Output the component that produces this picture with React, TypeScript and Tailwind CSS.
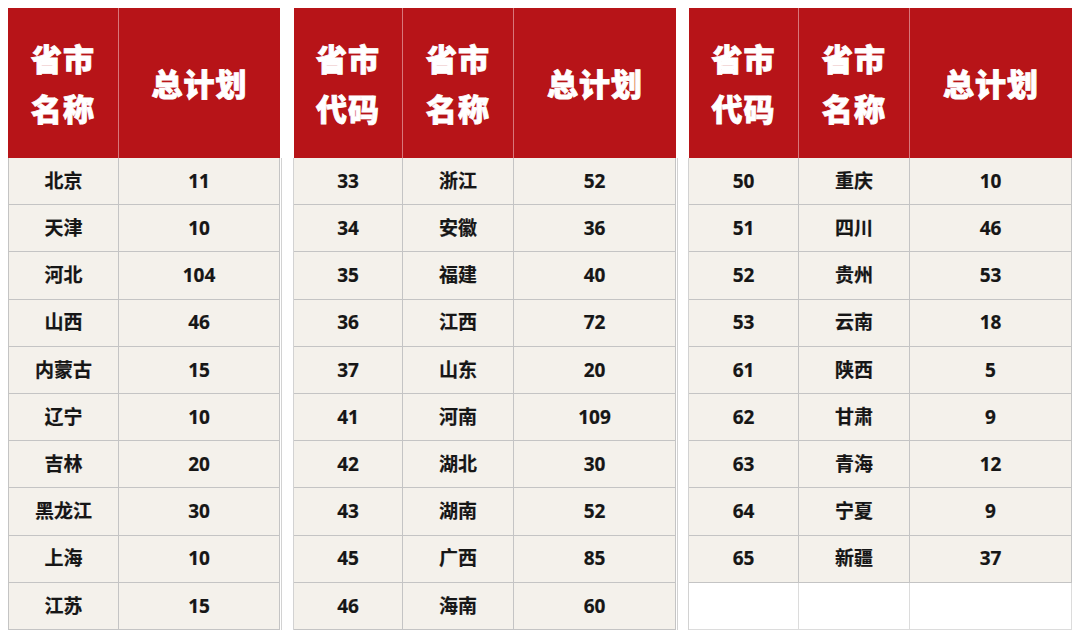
import React from "react";

const RED = "bg-[#b71418]";

type Col = { w: string; head: string[] };

const t1: { cols: Col[]; rows: string[][] } = {
  cols: [
    { w: "w-[111px]", head: ["省市", "名称"] },
    { w: "w-[161px]", head: ["总计划"] },
  ],
  rows: [
    ["北京", "11"],
    ["天津", "10"],
    ["河北", "104"],
    ["山西", "46"],
    ["内蒙古", "15"],
    ["辽宁", "10"],
    ["吉林", "20"],
    ["黑龙江", "30"],
    ["上海", "10"],
    ["江苏", "15"],
  ],
};

const t2 = {
  cols: [
    { w: "w-[109px]", head: ["省市", "代码"] },
    { w: "w-[111px]", head: ["省市", "名称"] },
    { w: "w-[162px]", head: ["总计划"] },
  ],
  rows: [
    ["33", "浙江", "52"],
    ["34", "安徽", "36"],
    ["35", "福建", "40"],
    ["36", "江西", "72"],
    ["37", "山东", "20"],
    ["41", "河南", "109"],
    ["42", "湖北", "30"],
    ["43", "湖南", "52"],
    ["45", "广西", "85"],
    ["46", "海南", "60"],
  ],
};

const t3 = {
  cols: [
    { w: "w-[110px]", head: ["省市", "代码"] },
    { w: "w-[111px]", head: ["省市", "名称"] },
    { w: "w-[162px]", head: ["总计划"] },
  ],
  rows: [
    ["50", "重庆", "10"],
    ["51", "四川", "46"],
    ["52", "贵州", "53"],
    ["53", "云南", "18"],
    ["61", "陕西", "5"],
    ["62", "甘肃", "9"],
    ["63", "青海", "12"],
    ["64", "宁夏", "9"],
    ["65", "新疆", "37"],
    ["", "", ""],
  ],
};

function Table({
  cols,
  rows,
  leftBorder,
}: {
  cols: Col[];
  rows: string[][];
  leftBorder: boolean;
}) {
  return (
    <div className="flex flex-col">
      <div className={`flex h-[150px] ${RED}`}>
        {cols.map((c, i) => (
          <div
            key={i}
            className={`${c.w} h-full flex flex-col items-center justify-center text-white text-[31px] font-black leading-[50px] tracking-[1px] [-webkit-text-stroke:0.8px_white] ${
              i < cols.length - 1 ? "border-r border-[#d8777a]" : ""
            }`}
            style={{ fontFamily: '"Noto Sans CJK SC", sans-serif' }}
          >
            {c.head.map((h, j) => (
              <div key={j}>{h}</div>
            ))}
          </div>
        ))}
      </div>
      {rows.map((r, ri) => {
        const empty = r.every((x) => x === "");
        return (
          <div
            key={ri}
            className={`flex h-[47.2px] ${empty ? "bg-white" : "bg-[#f4f1eb]"}`}
          >
            {r.map((v, ci) => (
              <div
                key={ci}
                className={`${cols[ci].w} h-full flex items-center justify-center border-b border-r ${
                  empty ? "border-[#dcdcdc]" : "border-[#c4c4c4]"
                } ${ci === 0 && leftBorder ? "border-l" : ""} text-[19px] font-bold text-[#161616] [-webkit-text-stroke:0.2px_#161616]`}
                style={{
                  fontFamily: '"Noto Sans", "Noto Sans CJK SC", sans-serif',
                }}
              >
                {v}
              </div>
            ))}
          </div>
        );
      })}
    </div>
  );
}

function Spacer({ w }: { w: string }) {
  return (
    <div className={`flex flex-col ${w}`}>
      <div className="h-[150px] bg-white" />
      <div className="h-[472px] border-l border-r border-[#d2d2d2] ml-[1px] bg-white" />
    </div>
  );
}

export default function App() {
  return (
    <div className="w-[1080px] h-[638px] bg-white pt-[8px] pl-[8px] flex items-start overflow-hidden">
      <Table cols={t1.cols} rows={t1.rows} leftBorder={true} />
      <Spacer w="w-[14px]" />
      <Table cols={t2.cols} rows={t2.rows} leftBorder={false} />
      <Spacer w="w-[13px]" />
      <Table cols={t3.cols} rows={t3.rows} leftBorder={false} />
    </div>
  );
}
